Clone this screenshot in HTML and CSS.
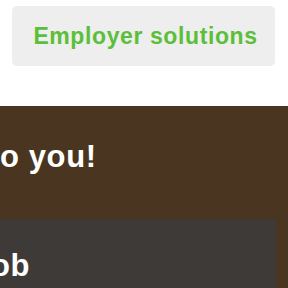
FILE: index.html
```html
<!DOCTYPE html>
<html>
<head>
<meta charset="utf-8">
<link rel="stylesheet" href="styles.css">
</head>
<body>
<header class="top">
  <a class="employer-btn" href="#">Employer solutions</a>
</header>
<section class="hero">
  <h2 class="hero-title">o you!</h2>
  <div class="card">
    <h3 class="card-title">ob</h3>
  </div>
</section>
</body>
</html>
```
FILE: styles.css
```css
html, body {
  margin: 0;
  padding: 0;
  background: #ffffff;
  font-family: "Liberation Sans", Arial, sans-serif;
  overflow: hidden;
}
.top {
  height: 106px;
  box-sizing: border-box;
  padding: 6px 13px 0 12px;
}
.employer-btn {
  display: flex;
  align-items: center;
  justify-content: center;
  height: 60px;
  background: #eeeeee;
  border-radius: 5px;
  color: #5cbf3a;
  font-weight: bold;
  font-size: 23px;
  letter-spacing: 0.6px;
  text-decoration: none;
  padding-left: 4px;
  box-sizing: border-box;
}
.hero {
  background: #4a3620;
  padding: 33px 12px 0 0;
  height: 200px;
  box-sizing: border-box;
}
.hero-title {
  margin: 0;
  color: #ffffff;
  font-size: 31px;
  letter-spacing: 0.6px;
  line-height: 36px;
  font-weight: bold;
}
.card {
  margin-top: 44px;
  background: #3e3a37;
  border-top-right-radius: 3px;
  padding: 29px 0 0 0;
  height: 100px;
}
.card-title {
  margin: 0 0 0 -9px;
  color: #ffffff;
  font-size: 31px;
  letter-spacing: 0.6px;
  line-height: 36px;
  font-weight: bold;
}
```
